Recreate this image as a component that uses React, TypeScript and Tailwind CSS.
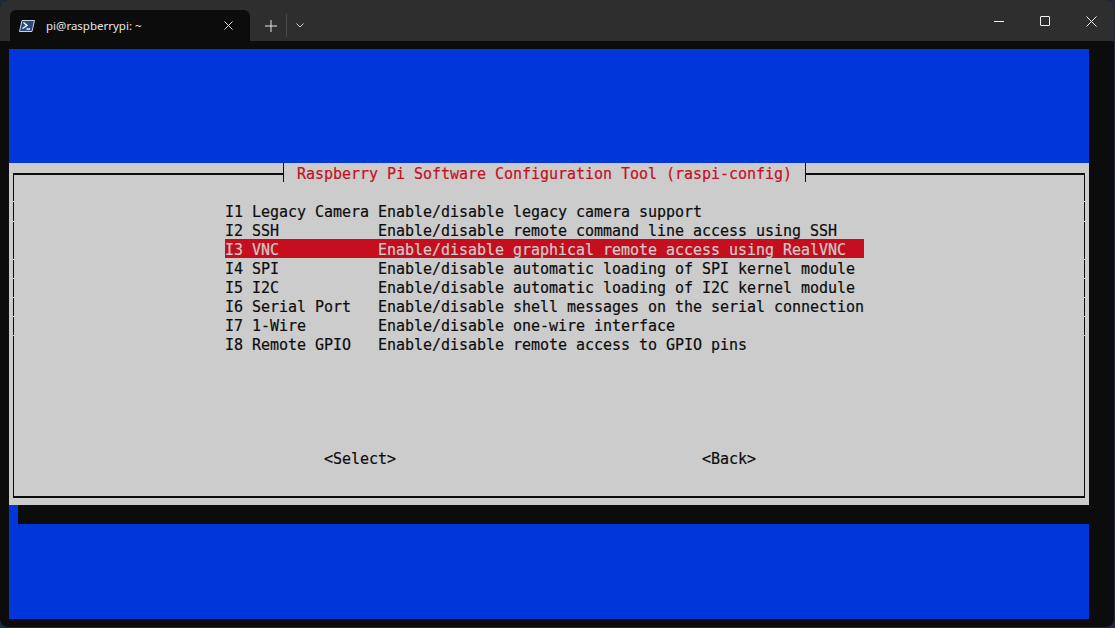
import React from 'react';

const menu = [
  ['I1 Legacy Camera', 'Enable/disable legacy camera support'],
  ['I2 SSH', 'Enable/disable remote command line access using SSH'],
  ['I3 VNC', 'Enable/disable graphical remote access using RealVNC'],
  ['I4 SPI', 'Enable/disable automatic loading of SPI kernel module'],
  ['I5 I2C', 'Enable/disable automatic loading of I2C kernel module'],
  ['I6 Serial Port', 'Enable/disable shell messages on the serial connection'],
  ['I7 1-Wire', 'Enable/disable one-wire interface'],
  ['I8 Remote GPIO', 'Enable/disable remote access to GPIO pins'],
];

// the box side is drawn from line glyph cells, so it has tiny breaks between some rows
const railSegments = [26, 19, 37, 18, 18, 18, 18, 160];

function Rail() {
  return (
    <div className="flex flex-col gap-px w-px shrink-0 h-full">
      {railSegments.map((h, i) => (
        <div key={i} className="w-full bg-[#0c0c0c]" style={{ height: h }} />
      ))}
    </div>
  );
}

function PowerShellIcon() {
  return (
    <svg width="16" height="12" viewBox="0 0 16 12" className="shrink-0">
      <path d="M3 0.5H15.5L13 11.5H0.5Z" fill="#2a4a78" stroke="#c3d3e8" strokeWidth="1" />
      <path d="M4.5 2.5L8 5.5L3.5 8.5" fill="none" stroke="#ffffff" strokeWidth="1.4" />
      <path d="M7.5 9H11" stroke="#ffffff" strokeWidth="1.4" />
    </svg>
  );
}

function TitleBar() {
  return (
    <div className="flex h-[41px] bg-[#2e2e2e] rounded-t-[8px] pl-[10px] pt-[10px] shrink-0">
      {/* tab */}
      <div className="flex items-center w-[240px] h-[31px] bg-[#0c0c0c] rounded-t-[6px] pl-[9px] pr-[17px]">
        <PowerShellIcon />
        <span className="ml-[11px] text-[11.5px] text-[#e6e6e6]">pi@raspberrypi: ~</span>
        <svg width="9" height="9" viewBox="0 0 9 9" className="ml-auto">
          <path d="M0.5 0.5L8.5 8.5M8.5 0.5L0.5 8.5" stroke="#e0e0e0" strokeWidth="1" />
        </svg>
      </div>
      {/* new tab + dropdown */}
      <div className="flex items-center h-[31px] pl-[15px]">
        <svg width="12" height="12" viewBox="0 0 12 12">
          <path d="M6 0V12M0 6H12" stroke="#e6e6e6" strokeWidth="1" />
        </svg>
        <div className="w-px h-[23px] bg-[#4a4a4a] ml-[9px]" />
        <svg width="8" height="5" viewBox="0 0 8 5" className="ml-[9px]">
          <path d="M0.5 0.5L4 4L7.5 0.5" fill="none" stroke="#d0d0d0" strokeWidth="1" />
        </svg>
      </div>
      {/* window buttons */}
      <div className="flex items-center h-[22px] ml-auto pr-[17px] gap-[36px]">
        <div className="w-[10px] h-px bg-[#f0f0f0]" />
        <div className="w-[10px] h-[10px] border border-[#f0f0f0] rounded-[1px]" />
        <svg width="11" height="11" viewBox="0 0 11 11">
          <path d="M0.5 0.5L10.5 10.5M10.5 0.5L0.5 10.5" stroke="#f0f0f0" strokeWidth="1" />
        </svg>
      </div>
    </div>
  );
}

function Dialog() {
  return (
    <div className="relative h-[342px] bg-[#cccccc] pt-[10px] pl-[4px] pr-[4px] tracking-[-0.03px] [-webkit-text-stroke:0.2px]">
      {/* title sits over the frame's top line */}
      <div className="absolute left-[274px] top-0 flex items-center justify-center w-[523px] h-[19px] pt-[4px] bg-[#cccccc] border-x border-[#0c0c0c] text-[#c50f1f] whitespace-nowrap">
        Raspberry Pi Software Configuration Tool (raspi-config)
      </div>

      <div className="flex h-[325px] border-y-2 border-[#0c0c0c]">
        <Rail />
        <div className="flex-1 flex flex-col pl-[211px] pt-[26px]">
          {menu.map(([name, text]) => {
            const selected = name === 'I3 VNC';
            return (
              <div
                key={name}
                className={
                  selected
                    ? 'flex w-[639px] h-[19px] pt-[4px] items-center bg-[#c50f1f] text-[#cccccc] whitespace-nowrap'
                    : 'flex w-[639px] h-[19px] pt-[4px] items-center text-[#0c0c0c] whitespace-nowrap'
                }
              >
                <span className="w-[153px] shrink-0">{name}</span>
                <span>{text}</span>
              </div>
            );
          })}

          {/* buttons */}
          <div className="flex h-[19px] mt-[97px] pl-[99px] text-[#0c0c0c]">
            <span className="w-[378px]">&lt;Select&gt;</span>
            <span>&lt;Back&gt;</span>
          </div>
        </div>
        <Rail />
      </div>
    </div>
  );
}

export default function App() {
  return (
    <div className="w-[1115px] h-[628px] overflow-hidden bg-[#1d2b3f] font-['DejaVu_Sans_Mono','Liberation_Mono',monospace] text-[15px] leading-[19px]">
      <div className="flex flex-col w-[1114px] h-[627px] bg-[#0c0c0c] rounded-[8px]">
        <div className="font-['Noto_Sans','Inter',sans-serif]">
          <TitleBar />
        </div>
        {/* terminal area */}
        <div className="flex flex-col w-[1080px] h-[570px] mt-[8px] ml-[9px] bg-[#0037da]">
          <div className="h-[114px] shrink-0" />
          <Dialog />
          {/* dialog shadow */}
          <div className="h-[19px] ml-[9px] bg-[#0c0c0c] shrink-0" />
        </div>
      </div>
    </div>
  );
}
